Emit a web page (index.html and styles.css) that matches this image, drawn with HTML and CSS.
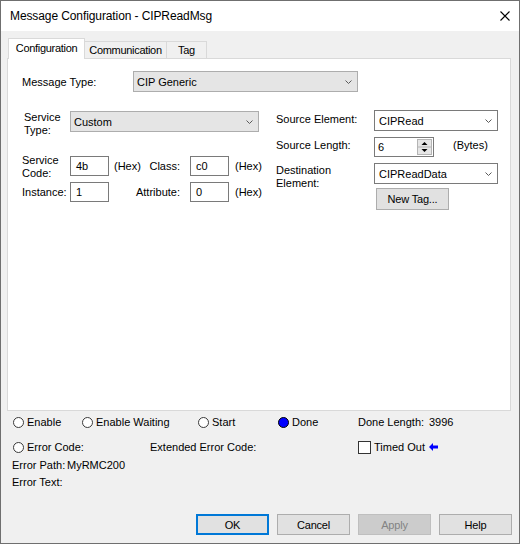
FILE: index.html
```html
<!DOCTYPE html>
<html>
<head>
<meta charset="utf-8">
<link rel="stylesheet" href="styles.css">
</head>
<body>
<div class="window">
  <div class="titlebar">
    <span class="title">Message Configuration - CIPReadMsg</span>
    <svg class="close" width="10" height="10" viewBox="0 0 10 10"><path d="M0.5 0.5 L9.5 9.5 M9.5 0.5 L0.5 9.5" stroke="#000" stroke-width="1.1" fill="none"/></svg>
  </div>
  <div class="body">
    <div class="tabs">
      <div class="tab active">Configuration</div>
      <div class="tab comm">Communication</div>
      <div class="tab tagt">Tag</div>
    </div>
    <div class="panel">
      <div class="row-mt">
        <span class="lbl-mt">Message Type:</span>
        <div class="combo gray mt"><span>CIP Generic</span><svg class="chev" width="7" height="4" viewBox="0 0 7 4"><polyline points="0.5,0.5 3.5,3.5 6.5,0.5" fill="none" stroke="#5a5a5a" stroke-width="1"/></svg></div>
      </div>
      <div class="cols">
        <div class="col-left">
          <div class="r-st">
            <div class="lbl2 lbl-st">Service<br>Type:</div>
            <div class="combo gray st"><span>Custom</span><svg class="chev" width="7" height="4" viewBox="0 0 7 4"><polyline points="0.5,0.5 3.5,3.5 6.5,0.5" fill="none" stroke="#5a5a5a" stroke-width="1"/></svg></div>
          </div>
          <div class="r-sc">
            <div class="lbl2 lbl-sc">Service<br>Code:</div>
            <div class="field">4b</div>
            <div class="mid"><span>(Hex)</span><span>Class:</span></div>
            <div class="field">c0</div>
            <span class="hex">(Hex)</span>
          </div>
          <div class="r-in">
            <div class="lbl-in">Instance:</div>
            <div class="field">1</div>
            <div class="mid end"><span>Attribute:</span></div>
            <div class="field">0</div>
            <span class="hex">(Hex)</span>
          </div>
        </div>
        <div class="col-right">
          <div class="r-se">
            <div class="rlbl">Source Element:</div>
            <div class="combo white src"><span>CIPRead</span><svg class="chev" width="7" height="4" viewBox="0 0 7 4"><polyline points="0.5,0.5 3.5,3.5 6.5,0.5" fill="none" stroke="#5a5a5a" stroke-width="1"/></svg></div>
          </div>
          <div class="r-sl">
            <div class="rlbl">Source Length:</div>
            <div class="spin">
              <span class="spin-val">6</span>
              <svg class="spin-btn" width="15" height="16" viewBox="0 0 15 16"><rect x="0.5" y="0.5" width="14" height="15" fill="#e6e6e6" stroke="#b4b4b4"/><line x1="1" y1="8" x2="14" y2="8" stroke="#b4b4b4"/><path d="M4.5 6 L7.5 3 L10.5 6 Z" fill="#000"/><path d="M4.5 10 L10.5 10 L7.5 13 Z" fill="#000"/></svg>
            </div>
            <span class="bytes">(Bytes)</span>
          </div>
          <div class="r-de">
            <div class="rlbl">Destination<br>Element:</div>
            <div class="combo white src"><span>CIPReadData</span><svg class="chev" width="7" height="4" viewBox="0 0 7 4"><polyline points="0.5,0.5 3.5,3.5 6.5,0.5" fill="none" stroke="#5a5a5a" stroke-width="1"/></svg></div>
          </div>
          <div class="btn newtag">New Tag...</div>
        </div>
      </div>
    </div>
    <div class="status">
      <div class="srow s-a">
        <div class="cell w-enable"><span class="radio"></span>Enable</div>
        <div class="cell w-waiting"><span class="radio"></span>Enable Waiting</div>
        <div class="cell w-start"><span class="radio"></span>Start</div>
        <div class="cell w-done"><span class="radio on"></span>Done</div>
        <div class="cell"><span class="dl-lbl">Done Length:</span><span>3996</span></div>
      </div>
      <div class="srow s-b">
        <div class="cell w-err"><span class="radio"></span>Error Code:</div>
        <div class="cell w-ext">Extended Error Code:</div>
        <div class="cell"><span class="check"></span>Timed Out<svg class="arrow" width="9" height="8" viewBox="0 0 9 8"><path d="M0 4 L4 0 L4 2.5 L9 2.5 L9 5.5 L4 5.5 L4 8 Z" fill="#0000ff"/></svg></div>
      </div>
      <div class="srow s-c"><span class="ep-lbl">Error Path:</span><span>MyRMC200</span></div>
      <div class="srow s-d"><span>Error Text:</span></div>
    </div>
    <div class="buttons">
      <div class="btn default">OK</div>
      <div class="btn">Cancel</div>
      <div class="btn disabled">Apply</div>
      <div class="btn">Help</div>
    </div>
  </div>
</div>
</body>
</html>
```
FILE: styles.css
```css
* { box-sizing: border-box; }
html, body { margin: 0; padding: 0; }
body {
  font-family: "Liberation Sans", Arial, sans-serif;
  font-size: 11px;
  color: #000;
  background: #f0f0f0;
}
.window {
  width: 520px;
  height: 544px;
  border: 1px solid #6f6f6f;
  background: #f0f0f0;
  display: flex;
  flex-direction: column;
}
.titlebar {
  flex: none;
  height: 30px;
  background: #fff;
  display: flex;
  align-items: center;
  justify-content: space-between;
  padding: 0 9px 0 9px;
}
.title { font-size: 12px; letter-spacing: -0.1px; }
.close { display: block; }
.body { flex: 1; padding: 7px 8px 0 6px; }

.tabs { display: flex; align-items: flex-end; height: 20px; }
.tab {
  height: 17px;
  border: 1px solid #d9d9d9;
  border-bottom: none;
  border-left: none;
  background: #f0f0f0;
  text-align: center;
  padding-top: 2px;
  line-height: 13px;
  letter-spacing: -0.3px;
  white-space: nowrap;
}
.tab.active {
  position: relative;
  z-index: 1;
  width: 77px;
  height: 21px;
  margin-bottom: -1px;
  margin-left: 1px;
  border-left: 1px solid #d9d9d9;
  background: #fff;
  padding-top: 3px;
}
.tab.comm { width: 82px; }
.tab.tagt { width: 40px; }

.panel {
  height: 353px;
  border: 1px solid #d9d9d9;
  background: #fff;
}
.row-mt { display: flex; align-items: center; height: 21px; margin: 12px 0 0 14px; }
.lbl-mt { width: 111px; }
.combo {
  display: flex;
  align-items: center;
  justify-content: space-between;
  height: 21px;
  padding: 0 5px 0 3px;
}
.combo.gray { background: #e5e5e5; border: 1px solid #adadad; }
.combo.white { background: #fff; border: 1px solid #7a7a7a; padding-left: 4px; }
.combo.mt { width: 225px; }
.combo.st { width: 189px; }
.combo.src { width: 124px; }
.chev { display: block; margin-top: 1px; }

.cols { display: flex; align-items: flex-start; margin: 18px 0 0 14px; }
.col-left { width: 254px; padding-top: 1px; }
.lbl2 { line-height: 13px; }
.r-st { display: flex; align-items: flex-start; height: 43px; }
.lbl-st { width: 48px; padding-left: 2px; }
.r-sc { display: flex; align-items: flex-start; height: 28px; }
.lbl-sc { width: 48px; }
.r-sc .field, .r-sc .mid, .r-sc .hex { margin-top: 2px; }
.field {
  width: 39px;
  height: 20px;
  border: 1px solid #7a7a7a;
  background: #fff;
  padding-left: 5px;
  line-height: 18px;
}
.mid {
  width: 81px;
  height: 20px;
  padding: 0 10px 0 5px;
  display: flex;
  justify-content: space-between;
  align-items: center;
}
.mid.end { justify-content: flex-end; }
.hex { margin-left: 6px; line-height: 20px; }
.r-in { display: flex; align-items: center; height: 20px; }
.lbl-in { width: 48px; }

.r-se, .r-sl, .r-de { display: flex; align-items: flex-start; height: 21px; }
.rlbl { width: 98px; line-height: 13px; padding-top: 3px; }
.r-sl { margin-top: 6px; height: 20px; }
.r-sl .rlbl { padding-top: 2px; }
.spin {
  width: 60px;
  height: 20px;
  border: 1px solid #7a7a7a;
  background: #fff;
  display: flex;
  align-items: flex-start;
}
.spin-val { padding-left: 3px; line-height: 18px; flex: 1; }
.spin-btn { display: block; margin: 1px 1px 0 0; }
.bytes { margin-left: 19px; line-height: 13px; padding-top: 2px; }
.r-de { margin-top: 6px; }
.r-de .rlbl { padding-top: 1px; }

.btn {
  width: 73px;
  height: 21px;
  background: #e1e1e1;
  border: 1px solid #adadad;
  display: flex;
  align-items: center;
  justify-content: center;
  letter-spacing: -0.2px;
}
.btn.newtag { margin: 4px 0 0 100px; height: 22px; }
.btn.default { border: 2px solid #0078d7; }
.btn.disabled { background: #cccccc; border-color: #bfbfbf; color: #838383; }

.status { padding-left: 6px; }
.srow { display: flex; align-items: center; height: 14px; white-space: nowrap; }
.s-a { margin-top: 4px; }
.s-b { margin-top: 11px; }
.s-c { margin-top: 4px; margin-left: -1px; }
.s-d { margin-top: 3px; margin-left: -1px; }
.cell { display: flex; align-items: center; }
.w-enable { width: 69px; }
.w-waiting { width: 116px; }
.w-start { width: 80px; }
.w-done { width: 80px; }
.w-err { width: 137px; }
.w-ext { width: 208px; }
.dl-lbl { display: inline-block; width: 71px; }
.ep-lbl { display: inline-block; width: 55px; }
.radio {
  display: inline-block;
  width: 11px;
  height: 11px;
  border-radius: 50%;
  border: 1px solid #3a3a3a;
  background: #fff;
  margin-right: 3px;
}
.radio.on { background: #0000ff; border: 1.5px solid #000; }
.check {
  display: inline-block;
  width: 13px;
  height: 13px;
  border: 1px solid #333;
  background: #fff;
  margin-right: 3px;
}
.arrow { display: block; margin-left: 4px; }

.buttons {
  display: flex;
  justify-content: flex-end;
  gap: 8px;
  margin: 25px -1px 0 0;
}
```
